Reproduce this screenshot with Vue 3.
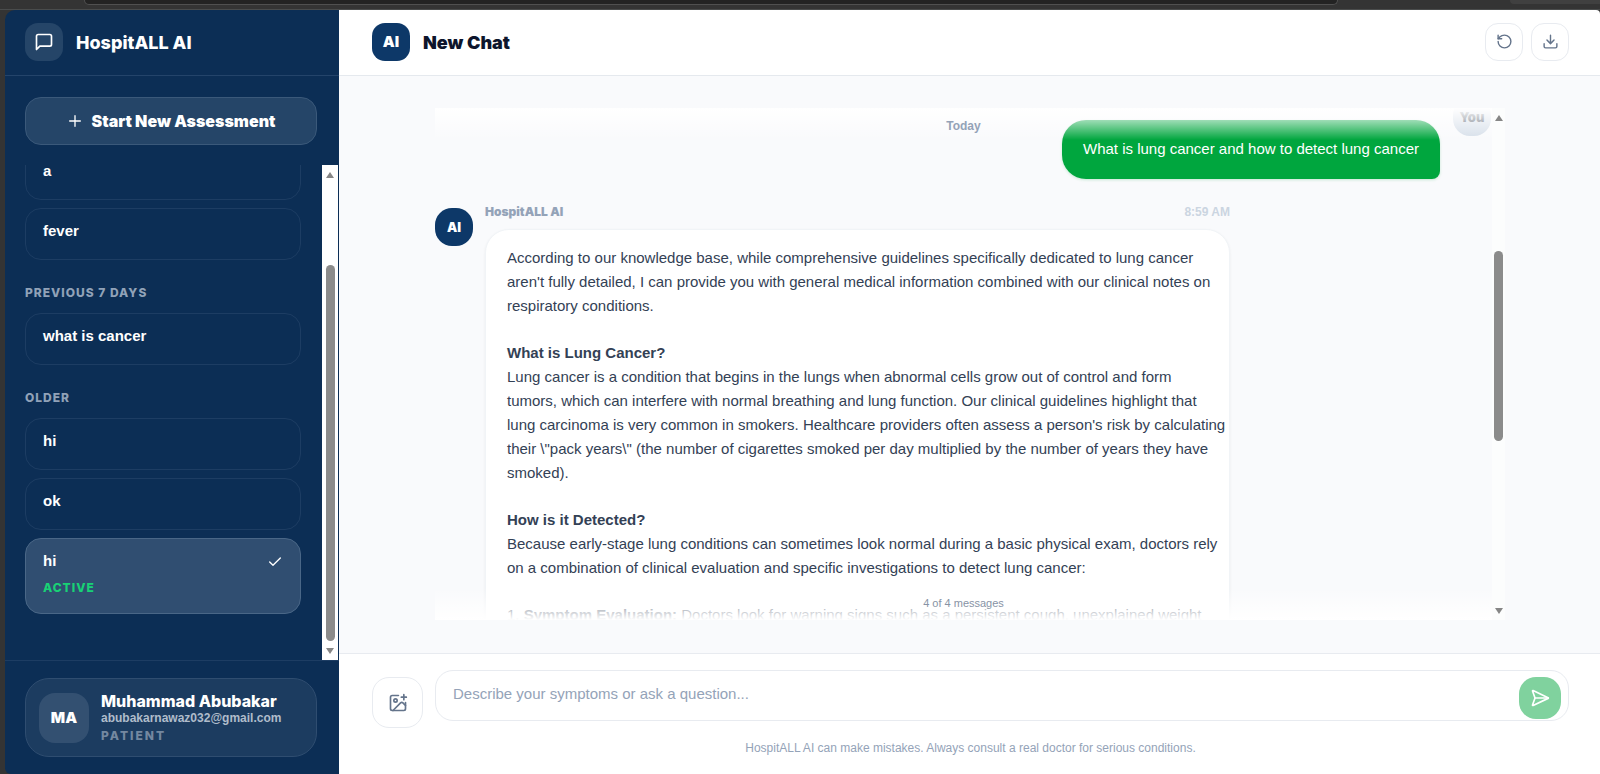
<script setup>
import { ref } from 'vue'

const draft = ref('')

const groups = [
  { label: '', items: [{ title: 'a' }, { title: 'fever' }] },
  { label: 'Previous 7 days', items: [{ title: 'what is cancer' }] },
  { label: 'Older', items: [{ title: 'hi' }, { title: 'ok' }, { title: 'hi', active: true }] },
]

const answer = [
  {
    lines: [
      'According to our knowledge base, while comprehensive guidelines specifically dedicated to lung cancer',
      "aren't fully detailed, I can provide you with general medical information combined with our clinical notes on",
      'respiratory conditions.',
    ],
  },
  {
    heading: 'What is Lung Cancer?',
    lines: [
      'Lung cancer is a condition that begins in the lungs when abnormal cells grow out of control and form',
      'tumors, which can interfere with normal breathing and lung function. Our clinical guidelines highlight that',
      "lung carcinoma is very common in smokers. Healthcare providers often assess a person's risk by calculating",
      'their \\"pack years\\" (the number of cigarettes smoked per day multiplied by the number of years they have',
      'smoked).',
    ],
  },
  {
    heading: 'How is it Detected?',
    lines: [
      'Because early-stage lung conditions can sometimes look normal during a basic physical exam, doctors rely',
      'on a combination of clinical evaluation and specific investigations to detect lung cancer:',
    ],
  },
]
</script>

<template>
  <div class="window">
    <div class="chrome"><div class="address"></div><div class="chip"></div></div>
    <div class="app">
      <aside class="sidebar">
        <div class="brand">
          <span class="brand-icon">
            <svg width="20" height="20" viewBox="0 0 24 24"><path d="M21 15a2 2 0 0 1-2 2H7l-4 4V5a2 2 0 0 1 2-2h14a2 2 0 0 1 2 2z" /></svg>
          </span>
          <h1 class="brand-name">HospitALL AI</h1>
        </div>

        <button class="new-chat" type="button">
          <svg width="16" height="16" viewBox="0 0 24 24"><path d="M4 12h16M12 4v16" /></svg>
          Start New Assessment
        </button>

        <div class="history">
          <nav class="history-list" aria-label="Chats">
            <section v-for="(group, g) in groups" :key="g" class="group">
              <h2 v-if="group.label" class="group-label">{{ group.label }}</h2>
              <button
                v-for="(item, i) in group.items"
                :key="i"
                type="button"
                class="chat"
                :class="{ active: item.active }"
              >
                <span class="chat-title">{{ item.title }}</span>
                <svg v-if="item.active" class="check" width="16" height="16" viewBox="0 0 24 24"><path d="M20 6 9 17l-5-5" /></svg>
                <span v-if="item.active" class="chat-state">ACTIVE</span>
              </button>
            </section>
          </nav>
          <div class="track side-track">
            <i class="arrow up"></i>
            <i class="thumb side-thumb"></i>
            <i class="arrow down"></i>
          </div>
        </div>

        <div class="account">
          <div class="account-card">
            <span class="initials">MA</span>
            <div class="account-text">
              <div class="account-name">Muhammad Abubakar</div>
              <div class="account-mail">abubakarnawaz032@gmail.com</div>
              <div class="account-role">PATIENT</div>
            </div>
          </div>
        </div>
      </aside>

      <main class="main">
        <header class="topbar">
          <span class="avatar square">AI</span>
          <h2 class="title">New Chat</h2>
          <button class="tool" type="button" aria-label="Reset chat">
            <svg width="17" height="17" viewBox="0 0 24 24"><path d="M3 12a9 9 0 1 0 9-9 9.75 9.75 0 0 0-6.74 2.74L3 8" /><path d="M3 3v5h5" /></svg>
          </button>
          <button class="tool" type="button" aria-label="Download chat">
            <svg width="17" height="17" viewBox="0 0 24 24"><path d="M21 15v4a2 2 0 0 1-2 2H5a2 2 0 0 1-2-2v-4M7 10l5 5 5-5M12 15V3" /></svg>
          </button>
        </header>

        <div class="stage">
          <div class="panel">
            <div class="viewport">
              <div class="thread">
                <div class="row mine">
                  <div class="question">What is lung cancer and how to detect lung cancer</div>
                  <span class="avatar you">You</span>
                </div>
                <div class="row">
                  <span class="avatar">AI</span>
                  <article class="reply">
                    <div class="meta">
                      <span class="sender">HospitALL AI</span>
                      <time class="time">8:59 AM</time>
                    </div>
                    <div class="card">
                      <p v-for="(part, i) in answer" :key="i">
                        <template v-if="part.heading"><strong>{{ part.heading }}</strong><br /></template><template v-for="(line, n) in part.lines" :key="n">{{ line }}<br /></template>
                      </p>
                      <p>1. <strong>Symptom Evaluation:</strong> Doctors look for warning signs such as a persistent cough, unexplained weight</p>
                    </div>
                  </article>
                </div>
              </div>
              <div class="fade fade-top"></div>
              <div class="fade fade-bottom"></div>
              <span class="day">Today</span>
              <span class="count">4 of 4 messages</span>
            </div>
            <div class="track panel-track">
              <i class="arrow up"></i>
              <i class="thumb panel-thumb"></i>
              <i class="arrow down"></i>
            </div>
          </div>
        </div>

        <form class="composer" @submit.prevent>
          <div class="composer-row">
            <button class="attach" type="button" aria-label="Add image">
              <svg width="20" height="20" viewBox="0 0 24 24"><path d="M16 5h6M19 2v6" /><path d="M21 11.5V19a2 2 0 0 1-2 2H5a2 2 0 0 1-2-2V5a2 2 0 0 1 2-2h7.500" /><path d="m21 15-3.086-3.086a2 2 0 0 0-2.828 0L6 21" /><circle cx="9" cy="9" r="2" /></svg>
            </button>
            <div class="field">
              <input v-model="draft" type="text" aria-label="Message" placeholder="Describe your symptoms or ask a question..." />
              <button class="send" type="submit" aria-label="Send">
                <svg width="20" height="20" viewBox="0 0 24 24"><path d="M3.700 3.050a.5.5 0 0 0-.68.630l2.800 7.630a2 2 0 0 1 0 1.380l-2.800 7.630a.5.5 0 0 0 .68.630l18-8.500a.5.5 0 0 0 0-.9z" /><path d="M6 12h16" /></svg>
              </button>
            </div>
          </div>
          <p class="note">HospitALL AI can make mistakes. Always consult a real doctor for serious conditions.</p>
        </form>
      </main>
    </div>
  </div>
</template>

<style>
body {
  background: #343434;
}
</style>

<style scoped>
* {
  box-sizing: border-box;
}
h1,
h2,
p {
  margin: 0;
}
button {
  font: inherit;
  padding: 0;
  cursor: pointer;
}
svg {
  flex: none;
  fill: none;
  stroke: currentColor;
  stroke-width: 2;
  stroke-linecap: round;
  stroke-linejoin: round;
}
.window {
  display: flex;
  flex-direction: column;
  height: 100vh;
  font-family: 'Liberation Sans', Arial, sans-serif;
  font-size: 15px;
}
.chrome {
  display: flex;
  align-items: flex-start;
  gap: 172px;
  flex: none;
  height: 10px;
  padding-left: 84px;
  border-bottom: 1px solid #4a4c4c;
}
.address {
  flex: 1;
  height: 5px;
  background: #232323;
  border: 1px solid #505050;
  border-top: 0;
  border-radius: 0 0 8px 8px;
}
.chip {
  width: 90px;
  height: 4px;
  background: #404040;
  border-radius: 0 0 0 4px;
}
.app {
  display: flex;
  flex: 1;
  min-height: 0;
  margin-left: 5px;
  border-radius: 10px 4px 0 6px;
  overflow: hidden;
}

/* Sidebar */
.sidebar {
  display: flex;
  flex-direction: column;
  flex: none;
  width: 334px;
  background: #0c2e55;
  color: #fff;
}
.brand {
  display: flex;
  align-items: center;
  gap: 13px;
  flex: none;
  height: 66px;
  padding: 0 20px 2px;
  border-bottom: 1px solid #24446a;
}
.brand-icon {
  display: grid;
  place-items: center;
  width: 38px;
  height: 38px;
  border-radius: 13px;
  background: #254568;
}
.brand-name,
.title {
  padding-top: 2px;
  font: 800 18px/24px Inter, sans-serif;
}
.new-chat {
  display: flex;
  align-items: center;
  justify-content: center;
  gap: 9px;
  flex: none;
  height: 48px;
  margin: 21px 22px 20px 20px;
  border: 1px solid #3b597a;
  border-radius: 16px;
  background: #254568;
  color: #fff;
  font: 900 16px/20px Inter, sans-serif;
}
.history {
  display: flex;
  flex: 1;
  min-height: 0;
}
.history-list {
  display: flex;
  flex: 1;
  flex-direction: column;
  justify-content: flex-end;
  gap: 24px;
  padding: 0 21px 46px 20px;
  overflow: hidden;
}
.group {
  display: flex;
  flex: none;
  flex-direction: column;
  gap: 8px;
}
.group-label {
  margin-bottom: 4px;
  color: #91a2b8;
  font: 800 12px/17px Inter, sans-serif;
  letter-spacing: 1px;
  text-transform: uppercase;
}
.chat {
  display: grid;
  grid-template-columns: 1fr auto;
  align-content: start;
  row-gap: 9px;
  height: 52px;
  padding: 12px 17px;
  border: 1px solid #1d3d63;
  border-radius: 16px;
  background: transparent;
  color: #fff;
  text-align: left;
}
.chat.active {
  height: 76px;
  background: #304e71;
  border-color: #4a6787;
}
.chat-title {
  font-weight: 700;
  line-height: 20px;
}
.check {
  margin-top: 3px;
}
.chat-state {
  color: #18d275;
  font: 800 12px/16px Inter, sans-serif;
  letter-spacing: 1px;
}
.account {
  flex: none;
  padding: 17px 22px 17px 20px;
  border-top: 1px solid #1d3d63;
}
.account-card {
  display: flex;
  align-items: center;
  gap: 12px;
  height: 79px;
  padding: 0 13px;
  border: 1px solid #2f4d70;
  border-radius: 24px;
  background: #1c3c60;
}
.initials {
  display: grid;
  place-items: center;
  width: 50px;
  height: 50px;
  border-radius: 16px;
  background: #335071;
  font: 900 15px/20px Inter, sans-serif;
}
.account-name {
  padding-top: 1px;
  font: 800 16px/18px Inter, sans-serif;
}
.account-mail {
  color: #b0bccb;
  font-size: 12px;
  font-weight: 700;
  line-height: 17px;
}
.account-role {
  color: #7488a0;
  font: 800 12px/17px Inter, sans-serif;
  letter-spacing: 2px;
}

/* Scrollbars */
.track {
  display: flex;
  flex-direction: column;
  align-items: center;
  flex: none;
  width: 16px;
}
.side-track {
  margin-right: 1px;
  padding: 7px 0 6px;
  background: #fff;
}
.panel-track {
  width: 13px;
  padding: 7px 0 6px;
  background: #fcfdfd;
}
.arrow {
  border: 4px solid transparent;
}
.arrow.up {
  border-top: 0;
  border-bottom: 6px solid #868686;
}
.arrow.down {
  margin-top: auto;
  border-bottom: 0;
  border-top: 6px solid #868686;
}
.thumb {
  width: 9px;
  border-radius: 5px;
  background: #8b8b8b;
}
.side-thumb {
  flex: 0 0 78%;
  margin-top: 87px;
}
.panel-thumb {
  flex: 0 0 38%;
  margin-top: 130px;
}

/* Main column */
.main {
  display: flex;
  flex: 1;
  flex-direction: column;
  min-width: 0;
  background: #fff;
}
.topbar {
  display: flex;
  align-items: center;
  flex: none;
  height: 66px;
  padding: 0 31px 2px 33px;
  border-bottom: 1px solid #e5e9ee;
}
.avatar {
  display: grid;
  place-items: center;
  flex: none;
  width: 38px;
  height: 38px;
  border-radius: 17px;
  background: #0d3868;
  color: #fff;
  font: 900 13px/16px Inter, sans-serif;
}
.avatar.square {
  border-radius: 13px;
  font-size: 15px;
}
.title {
  margin: 0 auto 0 13px;
  color: #0d152c;
  font-weight: 900;
}
.tool,
.attach {
  display: grid;
  place-items: center;
  border: 1px solid #e8ebf0;
  background: #fff;
  color: #64748b;
}
.tool {
  width: 38px;
  height: 38px;
  margin-left: 8px;
  border-radius: 13px;
}
.stage {
  flex: 1;
  min-height: 0;
  padding: 32px 95px 33px 96px;
  background: #f9fafc;
}
.panel {
  display: flex;
  height: 100%;
}
.viewport {
  position: relative;
  flex: 1;
  min-width: 0;
  overflow: hidden;
}
.thread {
  display: flex;
  flex-direction: column;
  gap: 29px;
  margin-top: -10px;
}
.row {
  display: flex;
  align-items: flex-start;
  gap: 12px;
}
.row.mine {
  justify-content: flex-end;
  gap: 13px;
  padding-right: 1px;
}
.avatar.you {
  background: #d5dee9;
  color: #4b5563;
}
.question {
  margin-top: 22px;
  padding: 17px 21px 18px;
  border-radius: 24px 24px 8px 24px;
  background: #00a63e;
  color: #fff;
  line-height: 24px;
  box-shadow: 0 1px 3px #00a63e33;
}
.reply {
  width: 745px;
}
.meta {
  display: flex;
  justify-content: space-between;
  height: 21px;
  line-height: 8px;
}
.sender {
  color: #94a3b8;
  font: 900 12px/8px Inter, sans-serif;
}
.time {
  color: #cbd5e1;
  font-size: 12px;
  font-weight: 700;
}
.card {
  display: flex;
  flex-direction: column;
  gap: 23px;
  padding: 16px 0 16px 21px;
  border: 1px solid #f1f4f7;
  border-radius: 24px;
  background: #fff;
  color: #334155;
  line-height: 24px;
  box-shadow: 0 1px 3px #0f172a0f;
}
.fade {
  position: absolute;
  left: 0;
  right: 0;
}
.fade-top {
  top: 0;
  height: 32px;
  background: linear-gradient(#fff, #ffffff00);
}
.fade-bottom {
  bottom: 0;
  height: 32px;
  background: linear-gradient(#ffffff00, #fff);
}
.day,
.count {
  position: absolute;
  left: 50%;
  transform: translateX(-50%);
  color: #94a3b8;
  font-size: 12px;
  line-height: 16px;
}
.day {
  top: 10px;
  font-weight: 700;
}
.count {
  bottom: 9px;
  color: #8793a5;
  font-size: 11px;
}

/* Composer */
.composer {
  flex: none;
  padding: 16px 31px 18px 33px;
  border-top: 1px solid #e8ebf0;
}
.composer-row {
  display: flex;
  align-items: flex-start;
  gap: 12px;
}
.attach {
  width: 51px;
  height: 51px;
  margin-top: 7px;
  border-radius: 17px;
}
.field {
  display: flex;
  align-items: center;
  flex: 1;
  height: 51px;
  padding: 4px 7px 0 17px;
  border: 1px solid #e8ebf0;
  border-radius: 18px;
}
.field input {
  flex: 1;
  min-width: 0;
  height: 24px;
  margin-bottom: 8px;
  padding: 0;
  border: 0;
  outline: 0;
  background: transparent;
  color: #334155;
  font: inherit;
}
.field input::placeholder {
  color: #94a3b8;
}
.send {
  display: grid;
  place-items: center;
  width: 42px;
  height: 42px;
  border: 0;
  border-radius: 17px;
  background: #80d29e;
  color: #fff;
}
.note {
  margin-top: 12px;
  color: #94a3b8;
  font-size: 12px;
  line-height: 16px;
  text-align: center;
}
</style>
